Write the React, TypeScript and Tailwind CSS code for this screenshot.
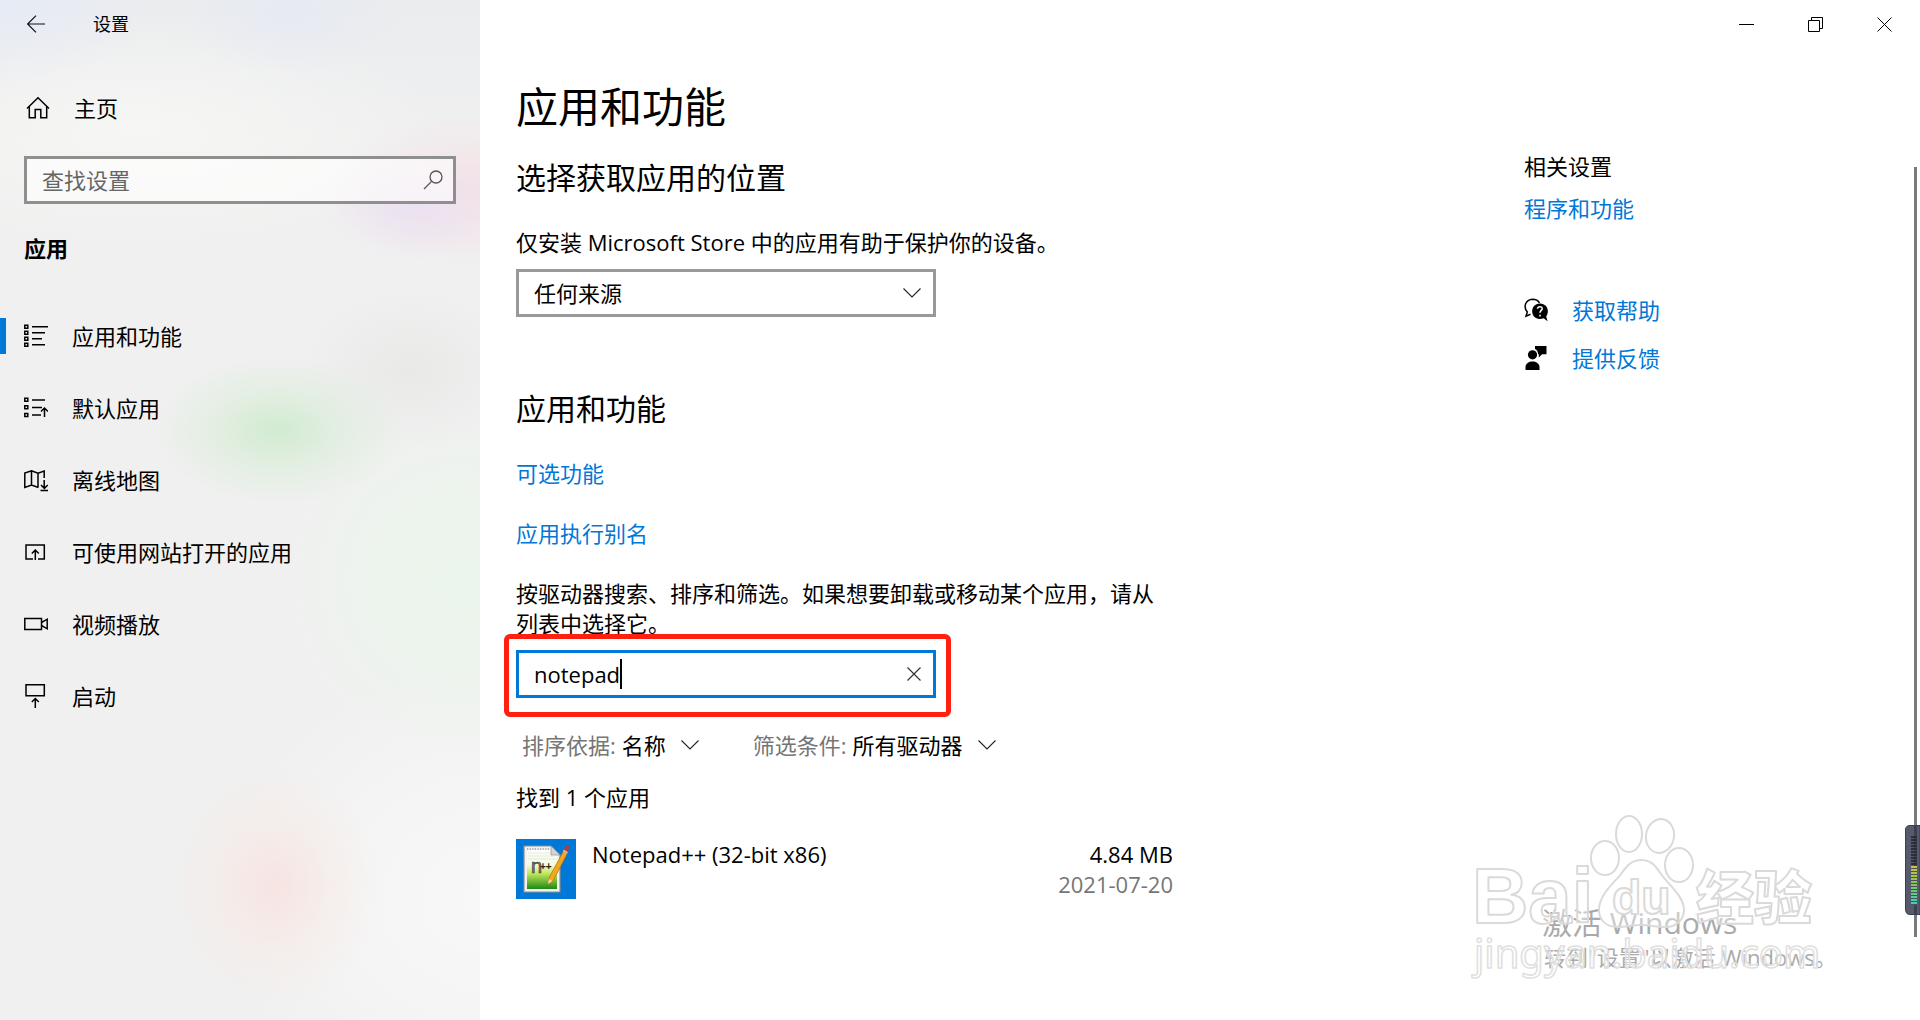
import { useState } from 'react';
import type { ReactNode } from 'react';

function Icon({ children, className = 'size-6' }: { children: ReactNode; className?: string }) {
  return (
    <svg
      viewBox="0 0 24 24"
      className={`shrink-0 ${className}`}
      fill="none"
      stroke="currentColor"
      strokeWidth="1.5"
      aria-hidden
    >
      {children}
    </svg>
  );
}

function Chevron({ className = '' }: { className?: string }) {
  return (
    <svg
      viewBox="0 0 18 10"
      className={`pointer-events-none h-2.5 w-[18px] shrink-0 ${className}`}
      fill="none"
      stroke="#222"
      strokeWidth="1.1"
      aria-hidden
    >
      <path d="M0.5 0.5 L9 9 L17.5 0.5" />
    </svg>
  );
}

const navItems = [
  {
    label: '应用和功能',
    icon: (
      <Icon>
        <path d="M8 2.7h16M8 8.7h13M8 14.7h10M8 20.7h13" />
        <path d="M0.8 1.2h3v3h-3zM0.8 7.2h3v3h-3zM0.8 13.2h3v3h-3zM0.8 19.2h3v3h-3z" />
      </Icon>
    ),
  },
  {
    label: '默认应用',
    icon: (
      <Icon>
        <path d="M8 4h13M8 11.5h10M8 19h9" />
        <path d="M0.8 2.2h3v3h-3zM0.8 9.7h3v3h-3zM0.8 17.5h3v3h-3z" />
        <path d="M20.5 21V12.5M17 15.5l3.5-3.5 3.5 3.5" />
      </Icon>
    ),
  },
  {
    label: '离线地图',
    icon: (
      <Icon>
        <path d="M14.5 19.5L7.5 17 0.8 19.5V5L7.5 2.8 14 5.2 20.2 3v7M7.5 2.8V17M14 5.2v14" />
        <path d="M20.2 12v8M17 17l3.4 3.4 3.4-3.4M16.5 22.5H24" />
      </Icon>
    ),
  },
  {
    label: '可使用网站打开的应用',
    icon: (
      <Icon>
        <path d="M9 19H2V5h18.3v14H14" />
        <path d="M11.3 20v-9.5M7.8 13.5l3.5-3.5 3.5 3.5" />
      </Icon>
    ),
  },
  {
    label: '视频播放',
    icon: (
      <Icon>
        <path d="M0.8 6.5h16.7v11H0.8z" />
        <path d="M17.5 10.5l5.7-3.3v9.6l-5.7-3.3" />
      </Icon>
    ),
  },
  {
    label: '启动',
    icon: (
      <Icon>
        <path d="M2 0.8h18.3v11H2z" />
        <path d="M11.3 24v-9M7.8 18l3.5-3.5 3.5 3.5" />
      </Icon>
    ),
  },
];

function Sidebar() {
  return (
    <aside className="flex w-[480px] shrink-0 flex-col bg-[#f0f0f0] bg-[radial-gradient(125px_75px_at_278px_430px,#d1ebd0,#d8edd688_50%,#f0f0f000),radial-gradient(105px_120px_at_275px_886px,#f6e4e2,#f7e9e488_50%,#f4f2f000),radial-gradient(90px_55px_at_415px_205px,#ebe1f1,#f0e8f000),radial-gradient(150px_75px_at_480px_190px,#f4e1e5,#f2eeee00),radial-gradient(110px_60px_at_290px_15px,#e7eaf3,#ebedf000),radial-gradient(140px_70px_at_10px_10px,#e7ebf5,#ebedf000),radial-gradient(110px_80px_at_410px_370px,#e9e9e8,#f0f0f000),radial-gradient(180px_180px_at_460px_580px,#ebf5ec,#edf4edaa_60%,#f0f0f000),radial-gradient(260px_240px_at_480px_900px,#f8f8f8,#f7f7f7aa_50%,#f0f0f000),radial-gradient(300px_120px_at_140px_130px,#f6f6f4,#f0f0f000),linear-gradient(#eaecee,#f0f0f0_150px)]">
      <div className="flex h-12 items-center pl-[27px]">
        <button type="button" aria-label="后退">
          <svg viewBox="0 0 18 18" className="size-[18px]" fill="none" stroke="#111" strokeWidth="1.2" aria-hidden>
            <path d="M18 9H0.8M9 0.6L0.6 9 9 17.4" />
          </svg>
        </button>
        <span className="ml-12 text-[18px]">设置</span>
      </div>

      <a href="#home" className="mt-[45px] ml-[26px] flex h-[30px] items-center gap-6">
        <Icon>
          <path d="M1 12.5L12 1.8 23 12.5" />
          <path d="M3.3 10.5v11.2h5.9v-8.2h5.6v8.2h5.9V10.5" />
        </Icon>
        主页
      </a>

      <div className="mx-6 mt-[33px] flex h-12 items-center border-[3px] border-[#8f8f8f] bg-white/60 pr-2.5 pl-[15px]">
        <input
          type="search"
          aria-label="查找设置"
          placeholder="查找设置"
          className="h-full min-w-0 flex-1 bg-transparent outline-none placeholder:text-[#666]"
        />
        <svg viewBox="0 0 20 20" className="size-5" fill="none" stroke="#555" strokeWidth="1.3" aria-hidden>
          <circle cx="13" cy="7" r="6" />
          <path d="M8.6 11.4L1 19" />
        </svg>
      </div>

      <h2 className="mt-[29px] pl-6 font-bold">应用</h2>

      <nav className="mt-[37px]">
        {navItems.map((item, i) => (
          <a
            key={item.label}
            href={`#nav-${i}`}
            aria-current={i === 0 ? 'page' : undefined}
            className="group flex h-[72px] items-center"
          >
            <span className="h-9 w-1.5 group-aria-[current=page]:bg-[#0078d7]" />
            <span className="mr-6 ml-[18px]">{item.icon}</span>
            {item.label}
          </a>
        ))}
      </nav>
    </aside>
  );
}

function WindowButtons() {
  const shapes = [
    { label: '最小化', d: 'M0 7.5h15' },
    { label: '还原', d: 'M0.5 3.5h11v11h-11zM3.5 3.5v-3h11v11h-3' },
    { label: '关闭', d: 'M0.5 0.5l14 14M14.5 0.5l-14 14' },
  ];
  return (
    <div className="flex h-12 justify-end pr-px">
      {shapes.map((s) => (
        <button key={s.label} type="button" aria-label={s.label} className="flex w-[69px] items-center justify-center">
          <svg viewBox="0 0 15 15" className="size-[15px]" fill="none" stroke="#000" aria-hidden>
            <path d={s.d} />
          </svg>
        </button>
      ))}
    </div>
  );
}

function FilterSelect({ id, label, value }: { id: string; label: string; value: string }) {
  return (
    <div className="flex items-center">
      <label htmlFor={id} className="mr-1.5 text-[#767676]">
        {label}
      </label>
      <span className="relative flex items-center">
        <select id={id} className="appearance-none bg-transparent pr-8 outline-none">
          <option>{value}</option>
        </select>
        <Chevron className="absolute right-0" />
      </span>
    </div>
  );
}

function NotepadLogo() {
  return (
    <svg viewBox="0 0 60 60" className="size-[60px] shrink-0" aria-hidden>
      <defs>
        <linearGradient id="page" x1="0" y1="0" x2="0" y2="1">
          <stop offset="0" stopColor="#ffffff" />
          <stop offset="0.38" stopColor="#f4fbe0" />
          <stop offset="0.6" stopColor="#c2e75e" />
          <stop offset="1" stopColor="#1d8a12" />
        </linearGradient>
      </defs>
      <rect width="60" height="60" fill="#0078d7" />
      <path d="M8 7h27l9 9v37H8z" fill="#f3f3f3" stroke="#8b8f8b" strokeWidth="1.2" />
      <path d="M11 11h23l7 6v33H11z" fill="url(#page)" />
      <path d="M35 7v9h9z" fill="#d4d4d4" stroke="#999" strokeWidth="0.8" />
      <path d="M11 10h23" stroke="#999" strokeWidth="1.6" strokeDasharray="1.2 1.4" />
      <path d="M12 14h22M12 17h26M12 20h28" stroke="#d3dcd3" strokeWidth="0.6" />
      <text x="15" y="34" fontSize="20" fontFamily="Liberation Sans Narrow, Liberation Sans" fill="#777" stroke="#333" strokeWidth="0.6">
        n
      </text>
      <text x="24" y="31" fontSize="10" fontWeight="bold" fontFamily="Liberation Sans" fill="#222">
        ++
      </text>
      <path d="M48 11l4 2-15 29-5 3 1-6z" fill="#f2a71e" stroke="#b36f0a" strokeWidth="0.7" />
      <path d="M32 45l0.8-5 3.7 2z" fill="#f0d9a8" />
      <path d="M49 8c1-2.5 4.5-1.5 4 1l-1.5 4-4-2z" fill="#c03a30" />
      <path d="M47.3 11.5l4 2.2" stroke="#b9c4d6" strokeWidth="1.8" />
    </svg>
  );
}

function Content() {
  const [keyword, setKeyword] = useState('notepad');

  return (
    <div className="flex min-w-0 flex-1 flex-col items-start pt-[31px]">
      <h1 className="text-[42px] leading-[56px]">应用和功能</h1>

      <h2 className="mt-[23px] text-[30px] leading-10">选择获取应用的位置</h2>
      <label htmlFor="source" className="mt-[29px]">
        仅安装 Microsoft Store 中的应用有助于保护你的设备。
      </label>
      <div className="relative mt-3 flex items-center">
        <select
          id="source"
          className="h-12 w-[420px] appearance-none border-[3px] border-[#999] bg-white pl-[15px] outline-none"
        >
          <option>任何来源</option>
        </select>
        <Chevron className="absolute right-[15px]" />
      </div>

      <h2 className="mt-[72px] text-[30px] leading-10">应用和功能</h2>
      <a href="#optional" className="mt-[29px] text-[#0078d7]">可选功能</a>
      <a href="#alias" className="mt-[30px] text-[#0078d7]">应用执行别名</a>

      <p className="mt-[30px] max-w-[657px]">
        按驱动器搜索、排序和筛选。如果想要卸载或移动某个应用，请从
        <br />
        列表中选择它。
      </p>
      <div className="relative mt-3">
        <div className="flex h-12 w-[420px] items-center border-[3px] border-[#0078d7] bg-white pr-3 pl-[15px]">
          <input
            aria-label="搜索此列表"
            value={keyword}
            onChange={(e) => setKeyword(e.target.value)}
            className="h-full field-sizing-content caret-transparent outline-none"
          />
          <span className="h-[30px] w-0.5 bg-black" />
          <button type="button" aria-label="清除" className="ml-auto" onClick={() => setKeyword('')}>
            <svg viewBox="0 0 14 14" className="size-3.5" fill="none" stroke="#333" strokeWidth="1.2" aria-hidden>
              <path d="M0.5 0.5l13 13M13.5 0.5l-13 13" />
            </svg>
          </button>
        </div>
        {/* highlight frame drawn around the search box */}
        <div className="pointer-events-none absolute -top-4 -right-[15px] -bottom-[19px] -left-3 rounded-md border-[5px] border-[#ff2010]" />
      </div>

      <div className="mt-8 flex gap-[54px] pl-1.5">
        <FilterSelect id="sort" label="排序依据:" value="名称" />
        <FilterSelect id="filter" label="筛选条件:" value="所有驱动器" />
      </div>

      <p className="mt-[22px]">找到 1 个应用</p>
      <ul className="mt-[27px] w-full max-w-[657px]">
        <li className="flex">
          <NotepadLogo />
          <span className="ml-4 flex-1">Notepad++ (32-bit x86)</span>
          <span className="flex flex-col text-right">
            <span>4.84 MB</span>
            <span className="text-[#767676]">2021-07-20</span>
          </span>
        </li>
      </ul>
    </div>
  );
}

function Related() {
  return (
    <aside className="flex w-[396px] shrink-0 flex-col items-start pt-[103px]">
      <h2>相关设置</h2>
      <a href="#programs" className="mt-3 text-[#0078d7]">程序和功能</a>
      <a href="#help" className="mt-[72px] flex items-center gap-6 text-[#0078d7]">
        <Icon className="size-6 text-black">
          <path d="M6.5 16.2L2 18.2 3.3 14C-1 9 1.5 1.5 8.5 1.2 12 1.2 14.5 3 15.5 5" />
          <path
            d="M16 5.5c-10 0-10.5 14.5-1 15.5 1.8 0.2 3.4-0.2 4.6-0.8l4 3-1.4-4.8C26 13 23 5.5 16 5.5z"
            fill="currentColor"
            stroke="none"
          />
          <path d="M13.5 10.8c0.3-3 5-2.6 4.7 0-0.2 1.7-2.2 1.7-2.2 4M16 16.7v1.7" stroke="#fff" />
        </Icon>
        获取帮助
      </a>
      <a href="#feedback" className="mt-[18px] flex items-center gap-6 text-[#0078d7]">
        <Icon className="size-6 text-black">
          <g fill="currentColor" stroke="none">
            <circle cx="8.5" cy="8.8" r="4.6" />
            <path d="M1.5 24v-3c0-7.5 14-7.5 14 0v3z" />
            <path d="M11 0h11.5v8.2h-4.3l-3.4 3.4V8.2h-0.8C14 5.5 13 4 11 3z" />
          </g>
        </Icon>
        提供反馈
      </a>
    </aside>
  );
}

function Watermark() {
  return (
    <div className="pointer-events-none absolute right-[95px] bottom-[24px] h-[190px] w-[355px]">
      <div className="absolute top-[97px] left-[72px] text-[30px] leading-10 whitespace-nowrap text-[#aaa]">
        激活 Windows
      </div>
      <div className="absolute top-[136px] left-[74px] leading-[30px] whitespace-nowrap text-[#aaa]">
        转到"设置"以激活 Windows。
      </div>
      <svg viewBox="0 0 355 190" className="absolute inset-0 size-full overflow-visible" aria-hidden>
        <g fill="#fff" fillOpacity="0.4" stroke="#dadada" strokeWidth="2" strokeLinejoin="round">
          <ellipse cx="135" cy="52" rx="14" ry="17" />
          <ellipse cx="159" cy="28" rx="13" ry="18" />
          <ellipse cx="190" cy="30" rx="14" ry="17" transform="rotate(10 190 30)" />
          <ellipse cx="209" cy="59" rx="14" ry="17" />
          <path d="M171 54c-10 0-15 7-20 14s-22 20-22 36c0 11 8 17 18 17 9 0 16-2 24-2s15 2 25 2c10 0 18-7 18-17 0-14-17-27-23-36s-10-14-20-14z" />
          <text x="2" y="117" fontSize="78" fontWeight="bold" fontFamily="Liberation Sans">
            Bai
          </text>
          <text x="142" y="108" fontSize="48" fontFamily="Liberation Sans" fontWeight="bold">
            du
          </text>
          <text x="226" y="113" fontSize="58" fontWeight="900" fontFamily="Noto Sans CJK SC">
            经验
          </text>
          <text x="4" y="162" fontSize="40" fontFamily="Noto Sans" strokeWidth="1.5" stroke="#e0e0e0">
            jingyan.baidu.com
          </text>
        </g>
      </svg>
    </div>
  );
}

function LevelMeter() {
  return (
    <svg viewBox="0 0 15 90" className="absolute top-[825px] right-0 h-[90px] w-[15px]" aria-hidden>
      <defs>
        <linearGradient id="level" x1="0" y1="0" x2="0" y2="1">
          <stop offset="0" stopColor="#cfc23c" />
          <stop offset="0.5" stopColor="#7fc65a" />
          <stop offset="1" stopColor="#3fd0b8" />
        </linearGradient>
      </defs>
      <path d="M15 0.5H5Q0.5 0.5 0.5 5V84Q0.5 89.5 5 89.5H15z" fill="#555a6c" stroke="#3b3f4e" />
      <rect x="9" y="0" width="3" height="90" fill="#3c4050" />
      <path d="M9 11v29" stroke="#2b2d3a" strokeWidth="6" strokeDasharray="2 1" />
      <rect x="6" y="41" width="6" height="38" fill="url(#level)" />
      <path d="M9 43v37" stroke="#4a5060" strokeWidth="6" strokeDasharray="1 2" />
    </svg>
  );
}

export default function App() {
  return (
    <div className="relative flex min-h-screen overflow-hidden bg-white font-['Open_Sans','Noto_Sans_CJK_SC',sans-serif] text-[22px] leading-[30px] text-black">
      <Sidebar />
      <main className="flex min-w-0 flex-1 flex-col">
        <WindowButtons />
        <div className="flex flex-1 pl-9">
          <Content />
          <Related />
        </div>
      </main>
      <div className="absolute top-[167px] right-[3px] bottom-[83px] w-[3px] bg-[#7a7a7a]" />
      <LevelMeter />
      <Watermark />
    </div>
  );
}
